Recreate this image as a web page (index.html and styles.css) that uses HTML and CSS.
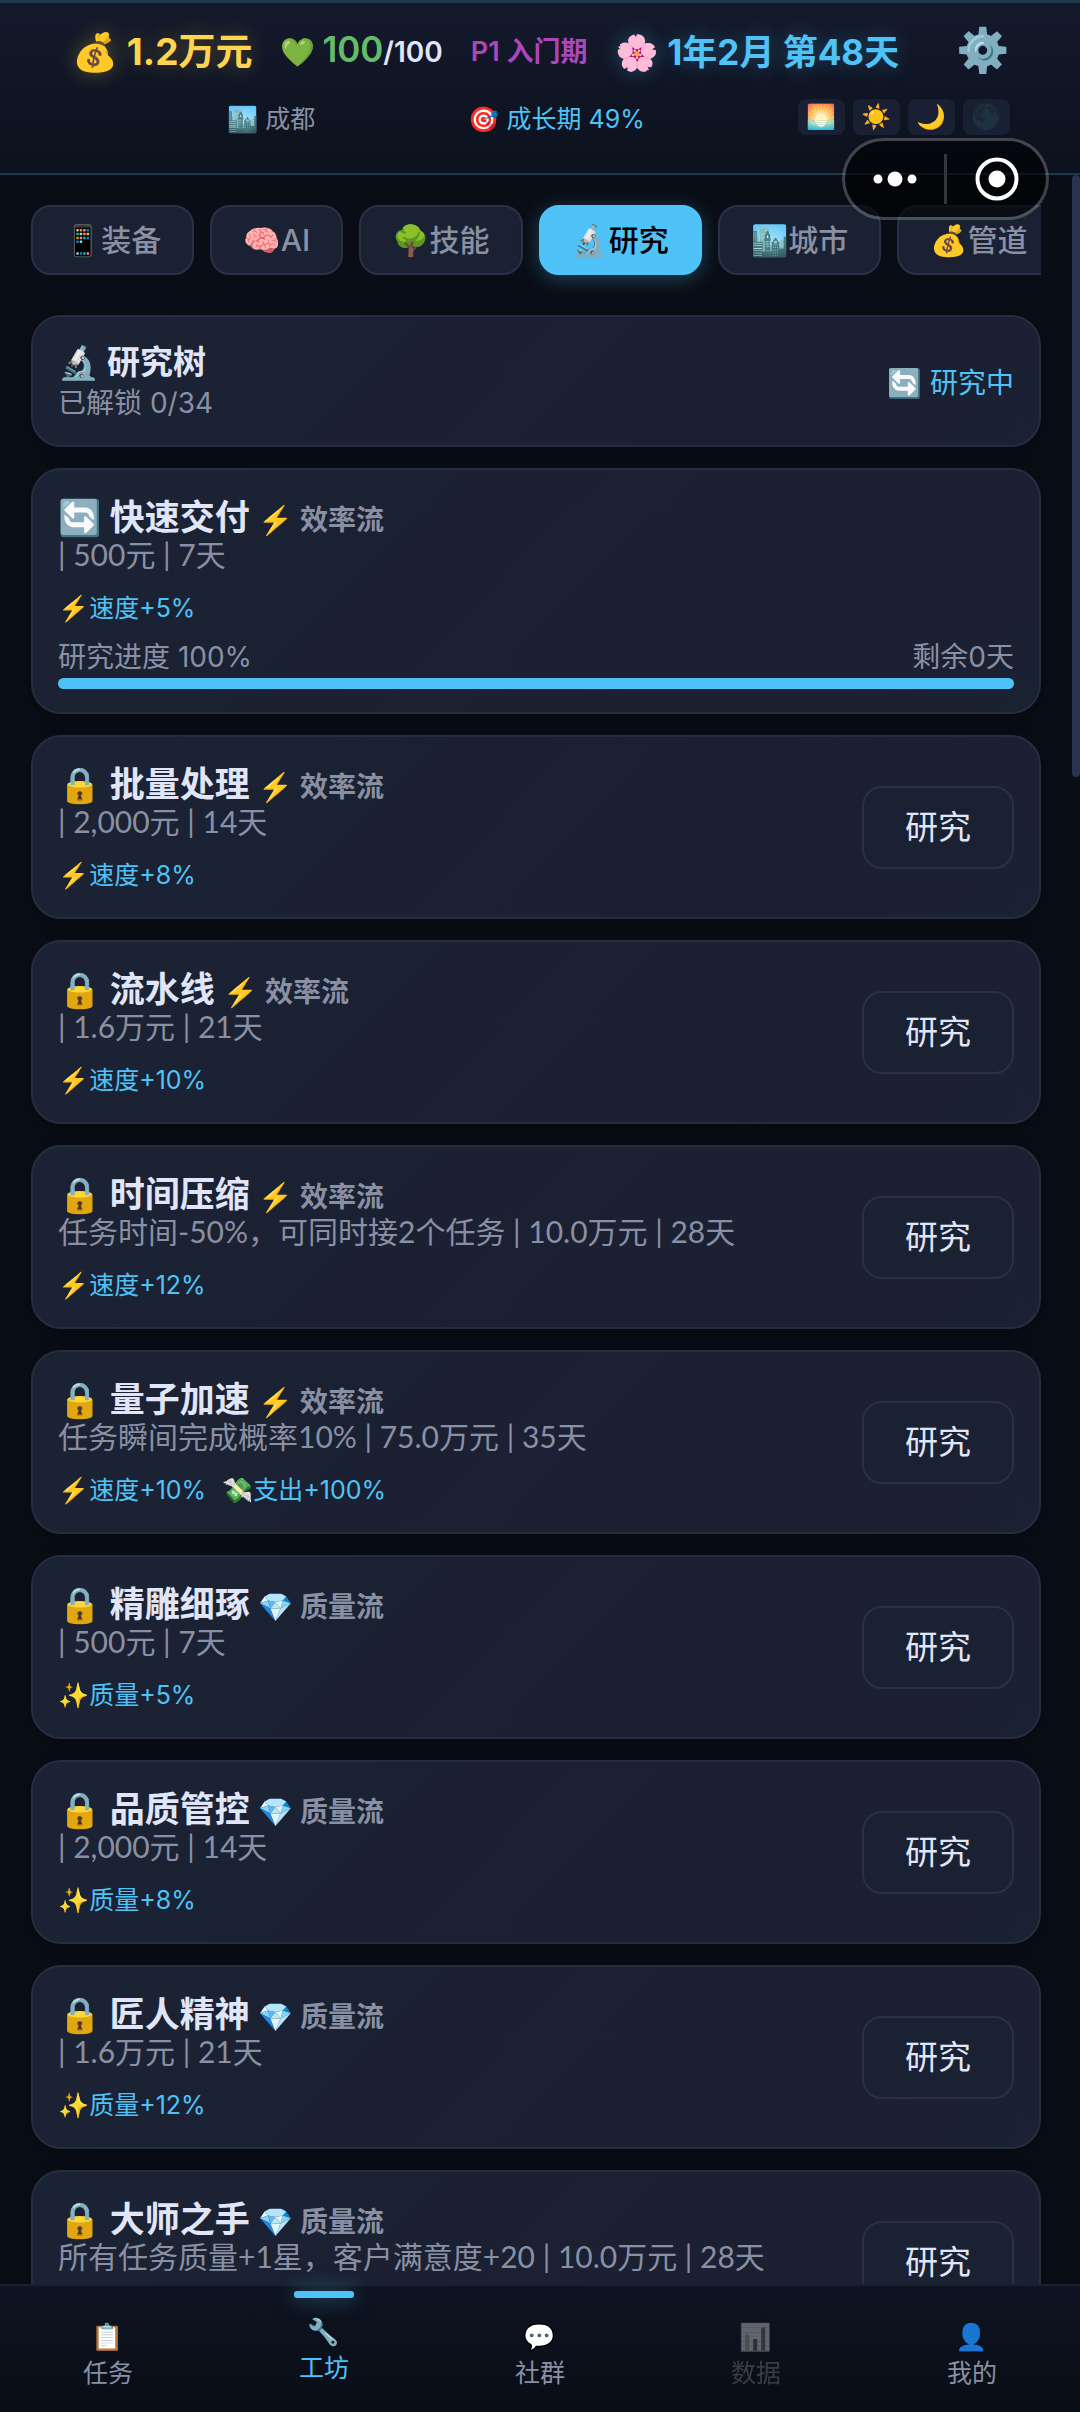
FILE: index.html
```html
<!DOCTYPE html>
<html lang="zh-CN">
<head>
    <meta charset="UTF-8">
    <meta name="viewport" content="width=device-width, initial-scale=1.0">
    <title>工坊</title>
    <link rel="stylesheet" href="styles.css">
</head>
<body>
    <header class="header">
        <div class="status-row">
            <span class="money">💰 1.2万元</span>
            <span class="health">💚 <b>100</b>/100</span>
            <span class="phase">P1 入门期</span>
            <span class="date">🌸 1年2月 第48天</span>
            <button class="settings" aria-label="设置">⚙️</button>
        </div>
        <div class="info-row">
            <span class="city">🏙️ 成都</span>
            <span class="growth">🎯 成长期 49%</span>
            <div class="slots">
                <span class="slot">🌅</span>
                <span class="slot">☀️</span>
                <span class="slot">🌙</span>
                <span class="slot used"><span>🌑</span></span>
            </div>
        </div>
    </header>

    <main class="content">
        <nav class="tabs">
            <button class="tab">📱装备</button>
            <button class="tab">🧠AI</button>
            <button class="tab">🌳技能</button>
            <button class="tab active">🔬研究</button>
            <button class="tab">🏙️城市</button>
            <button class="tab">💰管道</button>
        </nav>

        <div class="card-list">
            <section class="card summary">
                <div class="card-main">
                    <h2 class="summary-title">🔬 研究树</h2>
                    <p class="summary-sub">已解锁 0/34</p>
                </div>
                <span class="researching">🔄 研究中</span>
            </section>

            <section class="card">
                <div class="card-main">
                    <h3 class="title">🔄 快速交付 <small>⚡ 效率流</small></h3>
                    <p class="desc">| 500元 | 7天</p>
                    <p class="effects"><span>⚡速度+5%</span></p>
                    <div class="progress-label"><span>研究进度 100%</span><span>剩余0天</span></div>
                    <div class="progress"><div class="progress-fill" style="width: 100%"></div></div>
                </div>
            </section>

            <section class="card">
                <div class="card-main">
                    <h3 class="title">🔒 批量处理 <small>⚡ 效率流</small></h3>
                    <p class="desc">| 2,000元 | 14天</p>
                    <p class="effects"><span>⚡速度+8%</span></p>
                </div>
                <button class="research-btn">研究</button>
            </section>

            <section class="card">
                <div class="card-main">
                    <h3 class="title">🔒 流水线 <small>⚡ 效率流</small></h3>
                    <p class="desc">| 1.6万元 | 21天</p>
                    <p class="effects"><span>⚡速度+10%</span></p>
                </div>
                <button class="research-btn">研究</button>
            </section>

            <section class="card">
                <div class="card-main">
                    <h3 class="title">🔒 时间压缩 <small>⚡ 效率流</small></h3>
                    <p class="desc">任务时间-50%，可同时接2个任务 | 10.0万元 | 28天</p>
                    <p class="effects"><span>⚡速度+12%</span></p>
                </div>
                <button class="research-btn">研究</button>
            </section>

            <section class="card">
                <div class="card-main">
                    <h3 class="title">🔒 量子加速 <small>⚡ 效率流</small></h3>
                    <p class="desc">任务瞬间完成概率10% | 75.0万元 | 35天</p>
                    <p class="effects"><span>⚡速度+10%</span><span>💸支出+100%</span></p>
                </div>
                <button class="research-btn">研究</button>
            </section>

            <section class="card">
                <div class="card-main">
                    <h3 class="title">🔒 精雕细琢 <small>💎 质量流</small></h3>
                    <p class="desc">| 500元 | 7天</p>
                    <p class="effects"><span>✨质量+5%</span></p>
                </div>
                <button class="research-btn">研究</button>
            </section>

            <section class="card">
                <div class="card-main">
                    <h3 class="title">🔒 品质管控 <small>💎 质量流</small></h3>
                    <p class="desc">| 2,000元 | 14天</p>
                    <p class="effects"><span>✨质量+8%</span></p>
                </div>
                <button class="research-btn">研究</button>
            </section>

            <section class="card">
                <div class="card-main">
                    <h3 class="title">🔒 匠人精神 <small>💎 质量流</small></h3>
                    <p class="desc">| 1.6万元 | 21天</p>
                    <p class="effects"><span>✨质量+12%</span></p>
                </div>
                <button class="research-btn">研究</button>
            </section>

            <section class="card">
                <div class="card-main">
                    <h3 class="title">🔒 大师之手 <small>💎 质量流</small></h3>
                    <p class="desc">所有任务质量+1星，客户满意度+20 | 10.0万元 | 28天</p>
                </div>
                <button class="research-btn">研究</button>
            </section>
        </div>
        <div class="scroll-thumb"></div>
    </main>

    <nav class="bottom-nav">
        <a class="nav-item" href="#tasks"><span class="nav-icon">📋</span>任务</a>
        <a class="nav-item active" href="#workshop"><span class="nav-icon">🔧</span>工坊</a>
        <a class="nav-item" href="#community"><span class="nav-icon">💬</span>社群</a>
        <a class="nav-item disabled" href="#data"><span class="nav-icon">📊</span>数据</a>
        <a class="nav-item" href="#me"><span class="nav-icon">👤</span>我的</a>
    </nav>

    <!-- mini-program capsule -->
    <div class="capsule">
        <button aria-label="更多">
            <svg width="44" height="18" viewBox="0 0 44 18"><circle cx="5" cy="9" r="4.5"/><circle cx="22" cy="9" r="7.5"/><circle cx="39" cy="9" r="4.5"/></svg>
        </button>
        <button aria-label="关闭">
            <svg width="44" height="44" viewBox="0 0 44 44"><circle class="ring" cx="22" cy="22" r="19.5"/><circle cx="22" cy="22" r="8.5"/></svg>
        </button>
    </div>
</body>
</html>
```
FILE: styles.css
```css
* {
    box-sizing: border-box;
}
body {
    margin: 0;
    height: 100vh;
    display: flex;
    flex-direction: column;
    overflow: hidden;
    position: relative;
    background-color: #090d15;
    color: #e0e6f8;
    font-family: Inter, "Noto Sans CJK SC", "Noto Color Emoji", sans-serif;
}
button {
    font-family: inherit;
    cursor: pointer;
}
h2, h3, p {
    margin: 0;
}

/* Header */
.header {
    padding: 16px 70px 38px 72px;
    border-top: 3px solid #1f3b50;
    border-bottom: 2px solid #20364a;
    background: linear-gradient(180deg, #141a2c, #0c111d);
}
.status-row {
    display: flex;
    align-items: center;
    height: 60px;
    gap: 28px;
    white-space: nowrap;
}
.money {
    font-size: 37px;
    font-weight: 700;
    color: #ffd54f;
    text-shadow: 0 0 20px rgba(255, 213, 79, 0.3);
}
.health {
    font-size: 28px;
    font-weight: 600;
}
.health b {
    font-size: 35px;
    font-weight: 600;
    color: #66bb6a;
}
.phase {
    font-size: 27px;
    font-weight: 600;
    color: #ab47bc;
}
.date {
    font-size: 35px;
    font-weight: 700;
    color: #4fc3f7;
    text-shadow: 0 0 20px rgba(79, 195, 247, 0.3);
}
.settings {
    margin-left: auto;
    padding: 0;
    border: none;
    background: none;
    font-size: 43px;
    line-height: 60px;
}
.info-row {
    display: flex;
    align-items: center;
    justify-content: space-between;
    height: 36px;
    margin-top: 20px;
    padding-left: 155px;
    font-size: 25px;
}
.city {
    color: #8a90a3;
}
.growth {
    color: #4fc3f7;
}
.slots {
    display: flex;
    gap: 8px;
}
.slot {
    width: 47px;
    height: 36px;
    border-radius: 8px;
    background-color: #192033;
    font-size: 24px;
    line-height: 36px;
    text-align: center;
}
.slot.used span {
    opacity: 0.6;
}

/* Content */
.content {
    flex: 1;
    min-height: 0;
    overflow: hidden;
    position: relative;
    padding: 30px 39px 0 31px;
}
.scroll-thumb {
    position: absolute;
    top: 0;
    right: 0;
    width: 8px;
    height: 602px;
    border-radius: 4px;
    background-color: #2a3350;
}
.tabs {
    display: flex;
    gap: 16px;
    overflow: hidden;
    /* room for the active tab's glow */
    margin: -20px 0 20px -20px;
    padding: 20px 0 20px 20px;
}
.tab {
    flex: none;
    height: 70px;
    padding: 0 31px;
    border: 2px solid #2a3146;
    border-radius: 20px;
    background-color: #1a2133;
    color: #8a90a3;
    font-size: 30px;
    line-height: 40px;
    font-weight: 500;
}
.tab.active {
    border-color: #4fc3f7;
    background-color: #4fc3f7;
    color: #000;
    box-shadow: 0 4px 20px rgba(79, 195, 247, 0.3);
}
.card-list {
    display: flex;
    flex-direction: column;
    gap: 21px;
}
.card {
    display: flex;
    align-items: center;
    justify-content: space-between;
    min-height: 184px;
    padding: 23px 25px;
    border: 2px solid #262d3f;
    border-radius: 30px;
    background: linear-gradient(135deg, #1a2335, #1b2032 50%, #1a2133);
    box-shadow: 0 4px 16px rgba(0, 0, 0, 0.3);
}
.card.summary {
    min-height: 0;
}
.card-main {
    flex: 1;
    align-self: flex-start;
}
.summary-title {
    font-size: 33px;
    line-height: 44px;
}
.summary-sub {
    font-size: 28px;
    line-height: 38px;
    color: #8a90a3;
}
.researching {
    font-size: 28px;
    color: #4fc3f7;
}
.title {
    height: 48px;
    font-size: 35px;
    line-height: 48px;
}
.title small {
    font-size: 28px;
    font-weight: 600;
    color: #8a90a3;
}
.desc {
    font-family: Lato, "Noto Sans CJK SC", sans-serif;
    font-size: 30px;
    line-height: 26px;
    color: #8a90a3;
}
.effects {
    display: flex;
    gap: 16px;
    margin-top: 22px;
    font-size: 25px;
    line-height: 38px;
    color: #4fc3f7;
}
.progress-label {
    display: flex;
    justify-content: space-between;
    margin-top: 13px;
    font-size: 28px;
    line-height: 34px;
    color: #8a90a3;
}
.progress {
    height: 11px;
    margin-top: 4px;
    border-radius: 6px;
    background-color: #0d1320;
    overflow: hidden;
}
.progress-fill {
    height: 100%;
    background-color: #4fc3f7;
}
.research-btn {
    width: 152px;
    height: 83px;
    border: 2px solid #2a3146;
    border-radius: 20px;
    background-color: #1a2133;
    color: #e0e6f8;
    font-size: 33px;
    line-height: 44px;
}

/* Bottom navigation */
.bottom-nav {
    display: flex;
    height: 128px;
    border-top: 2px solid #16202e;
    background: linear-gradient(180deg, #0e1422, #090d16);
    position: relative;
}
.nav-item {
    flex: 1;
    display: flex;
    flex-direction: column;
    align-items: center;
    padding-top: 33px;
    color: #8a90a3;
    font-size: 25px;
    line-height: 36px;
    text-decoration: none;
    position: relative;
}
.nav-icon {
    font-size: 26px;
}
.nav-item.active {
    padding-top: 28px;
    color: #4fc3f7;
}
.nav-item.active::before {
    content: "";
    position: absolute;
    top: 5px;
    width: 60px;
    height: 7px;
    border-radius: 3px;
    background-color: #4fc3f7;
    box-shadow: 0 0 20px rgba(79, 195, 247, 0.5);
}
.nav-item.disabled {
    opacity: 0.35;
    filter: grayscale(1);
}

/* Floating capsule */
.capsule {
    position: absolute;
    top: 138px;
    right: 31px;
    display: flex;
    align-items: center;
    width: 207px;
    height: 82px;
    border: 3px solid rgba(255, 255, 255, 0.22);
    border-radius: 41px;
    background-color: rgba(0, 0, 0, 0.6);
    background-clip: padding-box;
}
.capsule button {
    flex: 1;
    display: flex;
    align-items: center;
    justify-content: center;
    height: 50px;
    padding: 0;
    border: none;
    background: none;
}
.capsule button + button {
    border-left: 3px solid #34363c;
}
.capsule svg {
    fill: #fff;
}
.capsule .ring {
    fill: none;
    stroke: #fff;
    stroke-width: 4;
}
```
